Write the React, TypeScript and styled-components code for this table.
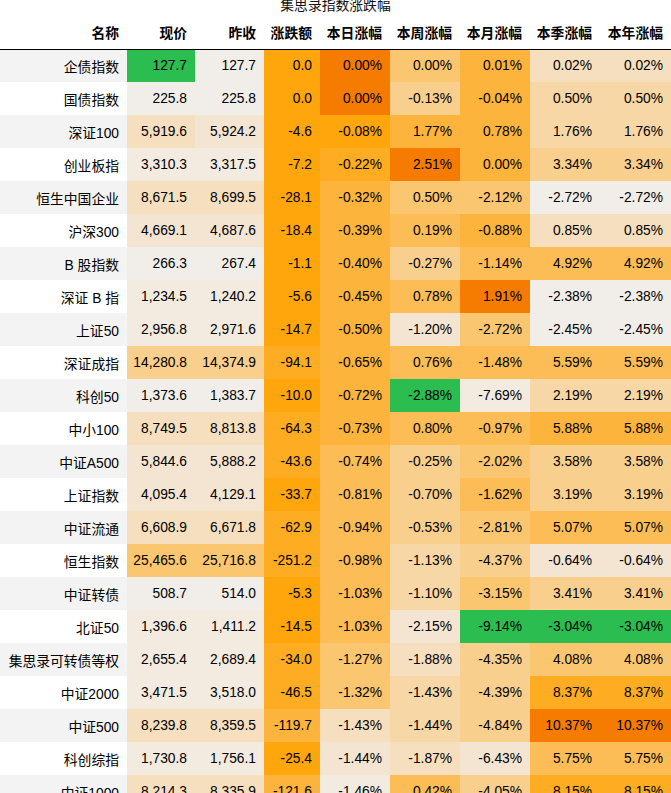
import React from 'react';
import styled, { createGlobalStyle } from 'styled-components';

const GlobalStyle = createGlobalStyle`
  html, body { margin: 0; padding: 0; background: #ffffff; }
  body {
    font-family: "Liberation Sans", Arial, "Noto Sans CJK SC", sans-serif;
    color: #000000;
  }
`;

const PALETTE: Record<string, string> = {
  G: '#2bbd4f',
  L0: '#f1eeea',
  L1: '#f3eae0',
  L2: '#f4e5d2',
  L3: '#f6dfbf',
  L4: '#f8d7a6',
  L5: '#f9cf8e',
  L6: '#fbc670',
  L7: '#fcbd56',
  L8: '#fdb43c',
  L9: '#feac22',
  L10: '#ffa60c',
  D: '#f57c00',
};

type Row = { name: string; cells: string[]; colors: string[] };

const rows: Row[] = [
  { name: '企债指数', cells: ['127.7', '127.7', '0.0', '0.00%', '0.00%', '0.01%', '0.02%', '0.02%'], colors: ['G', 'L0', 'L10', 'D', 'L6', 'L8', 'L3', 'L3'] },
  { name: '国债指数', cells: ['225.8', '225.8', '0.0', '0.00%', '-0.13%', '-0.04%', '0.50%', '0.50%'], colors: ['L0', 'L0', 'L10', 'D', 'L5', 'L8', 'L4', 'L4'] },
  { name: '深证100', cells: ['5,919.6', '5,924.2', '-4.6', '-0.08%', '1.77%', '0.78%', '1.76%', '1.76%'], colors: ['L3', 'L2', 'L10', 'L10', 'L8', 'L8', 'L4', 'L4'] },
  { name: '创业板指', cells: ['3,310.3', '3,317.5', '-7.2', '-0.22%', '2.51%', '0.00%', '3.34%', '3.34%'], colors: ['L1', 'L1', 'L10', 'L9', 'D', 'L8', 'L5', 'L5'] },
  { name: '恒生中国企业', cells: ['8,671.5', '8,699.5', '-28.1', '-0.32%', '0.50%', '-2.12%', '-2.72%', '-2.72%'], colors: ['L3', 'L3', 'L10', 'L8', 'L6', 'L6', 'L0', 'L0'] },
  { name: '沪深300', cells: ['4,669.1', '4,687.6', '-18.4', '-0.39%', '0.19%', '-0.88%', '0.85%', '0.85%'], colors: ['L2', 'L2', 'L10', 'L8', 'L7', 'L8', 'L3', 'L3'] },
  { name: 'B 股指数', cells: ['266.3', '267.4', '-1.1', '-0.40%', '-0.27%', '-1.14%', '4.92%', '4.92%'], colors: ['L0', 'L0', 'L10', 'L8', 'L5', 'L7', 'L7', 'L7'] },
  { name: '深证 B 指', cells: ['1,234.5', '1,240.2', '-5.6', '-0.45%', '0.78%', '1.91%', '-2.38%', '-2.38%'], colors: ['L1', 'L1', 'L10', 'L8', 'L7', 'D', 'L0', 'L0'] },
  { name: '上证50', cells: ['2,956.8', '2,971.6', '-14.7', '-0.50%', '-1.20%', '-2.72%', '-2.45%', '-2.45%'], colors: ['L1', 'L1', 'L10', 'L8', 'L2', 'L6', 'L0', 'L0'] },
  { name: '深证成指', cells: ['14,280.8', '14,374.9', '-94.1', '-0.65%', '0.76%', '-1.48%', '5.59%', '5.59%'], colors: ['L5', 'L5', 'L9', 'L8', 'L7', 'L7', 'L7', 'L7'] },
  { name: '科创50', cells: ['1,373.6', '1,383.7', '-10.0', '-0.72%', '-2.88%', '-7.69%', '2.19%', '2.19%'], colors: ['L0', 'L0', 'L10', 'L8', 'G', 'L1', 'L4', 'L4'] },
  { name: '中小100', cells: ['8,749.5', '8,813.8', '-64.3', '-0.73%', '0.80%', '-0.97%', '5.88%', '5.88%'], colors: ['L3', 'L3', 'L9', 'L8', 'L7', 'L7', 'L8', 'L8'] },
  { name: '中证A500', cells: ['5,844.6', '5,888.2', '-43.6', '-0.74%', '-0.25%', '-2.02%', '3.58%', '3.58%'], colors: ['L2', 'L2', 'L9', 'L7', 'L5', 'L6', 'L5', 'L5'] },
  { name: '上证指数', cells: ['4,095.4', '4,129.1', '-33.7', '-0.81%', '-0.70%', '-1.62%', '3.19%', '3.19%'], colors: ['L2', 'L2', 'L10', 'L7', 'L5', 'L7', 'L5', 'L5'] },
  { name: '中证流通', cells: ['6,608.9', '6,671.8', '-62.9', '-0.94%', '-0.53%', '-2.81%', '5.07%', '5.07%'], colors: ['L3', 'L3', 'L9', 'L7', 'L5', 'L6', 'L7', 'L7'] },
  { name: '恒生指数', cells: ['25,465.6', '25,716.8', '-251.2', '-0.98%', '-1.13%', '-4.37%', '-0.64%', '-0.64%'], colors: ['L6', 'L6', 'L9', 'L7', 'L4', 'L5', 'L2', 'L2'] },
  { name: '中证转债', cells: ['508.7', '514.0', '-5.3', '-1.03%', '-1.10%', '-3.15%', '3.41%', '3.41%'], colors: ['L0', 'L0', 'L10', 'L7', 'L4', 'L6', 'L5', 'L5'] },
  { name: '北证50', cells: ['1,396.6', '1,411.2', '-14.5', '-1.03%', '-2.15%', '-9.14%', '-3.04%', '-3.04%'], colors: ['L1', 'L1', 'L10', 'L7', 'L2', 'G', 'G', 'G'] },
  { name: '集思录可转债等权', cells: ['2,655.4', '2,689.4', '-34.0', '-1.27%', '-1.88%', '-4.35%', '4.08%', '4.08%'], colors: ['L1', 'L1', 'L9', 'L6', 'L3', 'L5', 'L6', 'L6'] },
  { name: '中证2000', cells: ['3,471.5', '3,518.0', '-46.5', '-1.32%', '-1.43%', '-4.39%', '8.37%', '8.37%'], colors: ['L1', 'L1', 'L9', 'L6', 'L4', 'L5', 'L9', 'L9'] },
  { name: '中证500', cells: ['8,239.8', '8,359.5', '-119.7', '-1.43%', '-1.44%', '-4.84%', '10.37%', '10.37%'], colors: ['L3', 'L3', 'L8', 'L3', 'L4', 'L5', 'D', 'D'] },
  { name: '科创综指', cells: ['1,730.8', '1,756.1', '-25.4', '-1.44%', '-1.87%', '-6.43%', '5.75%', '5.75%'], colors: ['L1', 'L1', 'L10', 'L2', 'L3', 'L2', 'L7', 'L7'] },
  { name: '中证1000', cells: ['8,214.3', '8,335.9', '-121.6', '-1.46%', '0.42%', '-4.05%', '8.15%', '8.15%'], colors: ['L3', 'L3', 'L8', 'L1', 'L7', 'L5', 'L9', 'L9'] },
];

const headers = ['名称', '现价', '昨收', '涨跌额', '本日涨幅', '本周涨幅', '本月涨幅', '本季涨幅', '本年涨幅'];
const widths = [127, 68, 69, 56, 70, 70, 70, 70, 71];

const Page = styled.div`
  width: 671px;
  height: 793px;
  overflow: hidden;
`;

const Table = styled.table`
  border-collapse: collapse;
  border-spacing: 0;
  table-layout: fixed;
  width: 671px;
  font-size: 13.8px;
`;

const Caption = styled.caption`
  height: 16px;
  line-height: 12px;
  font-size: 13.8px;
  text-align: center;
  color: #111111;
  padding: 0;
  vertical-align: top;
`;

const HeadCell = styled.th`
  height: 33px;
  padding: 0 8px 0 0;
  text-align: right;
  font-weight: bold;
  white-space: nowrap;
  background: #ffffff;
  border-bottom: 1px solid #000000;
  box-sizing: border-box;
`;

const BodyRow = styled.tr`
  height: 33px;
  &:nth-child(odd) th { background: #f3f3f3; }
  &:nth-child(even) th { background: #ffffff; }
`;

const NameCell = styled.th`
  padding: 0 8px 0 0;
  text-align: right;
  font-weight: normal;
  white-space: nowrap;
`;

const ValueCell = styled.td<{ $bg: string }>`
  padding: 0 8px 0 0;
  text-align: right;
  white-space: nowrap;
  background: ${(p) => p.$bg};
`;

export default function App() {
  return (
    <Page>
      <GlobalStyle />
      <Table>
        <Caption>集思录指数涨跌幅</Caption>
        <colgroup>
          {widths.map((w, i) => (
            <col key={i} style={{ width: w }} />
          ))}
        </colgroup>
        <thead>
          <tr>
            {headers.map((h) => (
              <HeadCell key={h}>{h}</HeadCell>
            ))}
          </tr>
        </thead>
        <tbody>
          {rows.map((r) => (
            <BodyRow key={r.name}>
              <NameCell>{r.name}</NameCell>
              {r.cells.map((c, i) => (
                <ValueCell key={i} $bg={PALETTE[r.colors[i]]}>
                  {c}
                </ValueCell>
              ))}
            </BodyRow>
          ))}
        </tbody>
      </Table>
    </Page>
  );
}
